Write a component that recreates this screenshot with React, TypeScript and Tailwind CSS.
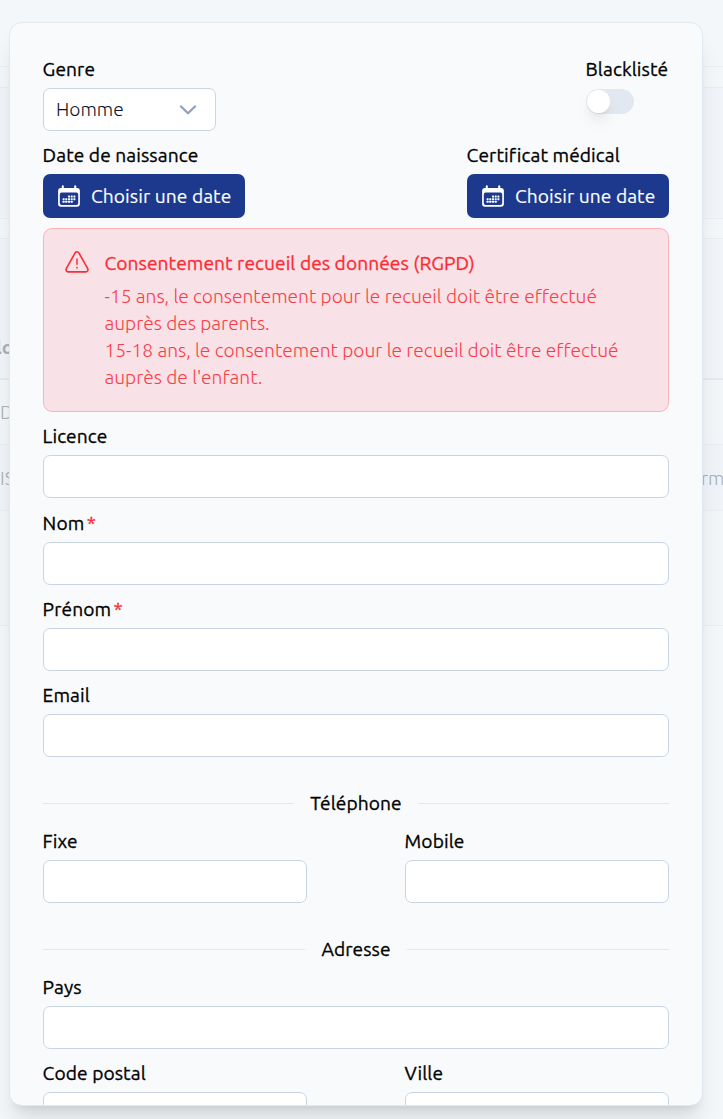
import { ReactNode } from "react";

function Label({ children, required }: { children: ReactNode; required?: boolean }) {
  return (
    <div className="-ml-[0.4px] h-[27px] whitespace-nowrap text-[19.2px] leading-[27px] tracking-[0.07px] text-black [-webkit-text-stroke:0.3px]">
      {children}
      {required && <span className="ml-[2.4px] text-[#fb2c36]">*</span>}
    </div>
  );
}

function Field({ label, required, className = "" }: { label: string; required?: boolean; className?: string }) {
  return (
    <label className={"flex flex-col gap-[5px] " + className}>
      <Label required={required}>{label}</Label>
      <input className="h-[43px] w-full rounded-[7px] border border-[#cad5e2] bg-white px-3 outline-none" />
    </label>
  );
}

const DOTS = [
  [10, 10.6], [12.7, 10.6], [15.4, 10.6],
  [4.6, 13.2], [7.3, 13.2], [10, 13.2], [12.7, 13.2], [15.4, 13.2],
  [4.6, 15.8], [7.3, 15.8], [10, 15.8], [12.7, 15.8],
];

function CalendarIcon() {
  return (
    <svg viewBox="0 0 22 22" className="size-[22px] shrink-0" fill="currentColor">
      <path
        fillRule="evenodd"
        d="M3.2 2.9h15.6A3 3 0 0 1 21.9 6v12.6a3 3 0 0 1-3.1 3.1H3.2A3 3 0 0 1 .1 18.6V6a3 3 0 0 1 3.1-3.1ZM3.7 7.6a1.9 1.9 0 0 0-1.9 1.9v8.6a1.9 1.9 0 0 0 1.9 1.9h14.6a1.9 1.9 0 0 0 1.9-1.9V9.5a1.9 1.9 0 0 0-1.9-1.9Z"
      />
      <rect x="3.8" y="0.3" width="2" height="4" rx="1" />
      <rect x="16.2" y="0.3" width="2" height="4" rx="1" />
      {DOTS.map(([x, y]) => (
        <rect key={`${x}-${y}`} x={x} y={y} width="2" height="2" rx="0.4" />
      ))}
    </svg>
  );
}

function WarningIcon() {
  return (
    <svg viewBox="0 0 24 22" className="h-[22px] w-6 shrink-0" fill="none" stroke="currentColor" strokeWidth="1.6" strokeLinecap="round" strokeLinejoin="round">
      <path d="M10.1 1.9 1.3 17.7A2.2 2.2 0 0 0 3.2 20.9H20.8A2.2 2.2 0 0 0 22.7 17.7L13.9 1.9A2.2 2.2 0 0 0 10.1 1.9Z" />
      <path d="M12 8v5.2" strokeWidth="1.5" />
      <path d="M12 16.5v.2" strokeWidth="1.7" />
    </svg>
  );
}

function DateField({ label }: { label: string }) {
  return (
    <div className="flex w-[202px] flex-col gap-[5px]">
      <Label>{label}</Label>
      <button className="flex h-11 items-center rounded-[7px] bg-[#1c398e] pl-[15px] text-[19.2px] text-white">
        <CalendarIcon />
        <span className="ml-[11px] whitespace-nowrap tracking-[0.06px] [-webkit-text-stroke:0.15px]">Choisir une date</span>
      </button>
    </div>
  );
}

function Divider({ title, className }: { title: string; className: string }) {
  return (
    <div className={"flex h-[27px] items-center gap-4 " + className}>
      <div className="h-px flex-1 bg-[#e2e8f0]" />
      <span className="text-[19.2px] leading-[27px] tracking-[0.07px] text-black [-webkit-text-stroke:0.3px]">{title}</span>
      <div className="h-px flex-1 bg-[#e2e8f0]" />
    </div>
  );
}

function Backdrop() {
  return (
    <div className="flex h-full flex-col text-[19.2px] font-light text-[#abb0b6]">
      <div className="h-[67px] border-b border-[#e9eef3]" />
      <div className="h-[21px] border-b border-[#e9eef3]" />
      <div className="h-[131px] border-b border-[#e9eef3] bg-[#f1f5f9]" />
      <div className="h-5 border-b border-[#e9eef3]" />
      <div className="flex h-[141px] items-end border-b-2 border-[#e6ebf2] bg-[#f1f5f9] pb-[16px] font-bold">
        <span className="-ml-[4px]">lo</span>
      </div>
      <div className="flex h-[65px] items-center border-b border-[#e9eef3] bg-[#f2f6f9]">D</div>
      <div className="flex h-[66px] items-center justify-between border-b border-[#e9eef3] bg-[#f0f4f9] pt-0.5">
        <span>IS</span>
        <span className="w-[22px]">rm</span>
      </div>
      <div className="h-[115px] border-b border-[#e9eef3] bg-[#f2f6f9]" />
    </div>
  );
}

export default function App() {
  return (
    <div className="relative h-[1119px] w-[723px] overflow-hidden bg-[#f3f7fa] font-['Ubuntu','Noto_Sans',sans-serif]">
      <Backdrop />
      <div className="absolute top-[22px] left-[9px] h-[1084px] w-[694px] overflow-hidden rounded-[13px] border border-[#e2e8f0] bg-[#f8fafc] px-[33px] pt-[33px] shadow-xl">
        <div className="flex justify-between">
          <div className="flex flex-col gap-[5px]">
            <Label>Genre</Label>
            <button className="flex h-[43px] w-[173px] items-center justify-between rounded-[7px] border border-[#cad5e2] bg-white pr-[18px] pl-3 text-[19.2px] font-light text-[#0f172b]">
              Homme
              <svg viewBox="0 0 18 10" className="h-2.5 w-[18px]" fill="none" stroke="#90a1b9" strokeWidth="2.3" strokeLinecap="round" strokeLinejoin="round">
                <path d="m2 1.5 7 6.8 7-6.8" />
              </svg>
            </button>
          </div>
          <div className="flex w-[83px] flex-col gap-[6px]">
            <Label>Blacklisté</Label>
            <div className="flex h-[25px] w-12 items-center rounded-full bg-[#e2e8f0] p-px">
              <div className="size-[22.5px] rounded-full bg-white shadow-lg" />
            </div>
          </div>
        </div>
        <div className="mt-[11px] flex justify-between">
          <DateField label="Date de naissance" />
          <DateField label="Certificat médical" />
        </div>
        <div className="mt-[10px] flex h-[184px] rounded-[9px] border border-[#ffb3b9] bg-[#f8e2e7] px-[21px] pt-[21px] text-[19.2px] leading-[27px] text-[#fb2c36]">
          <div className="pt-[0.8px]"><WarningIcon /></div>
          <div className="ml-[15.5px] whitespace-nowrap">
            <div className="tracking-[0.05px] [-webkit-text-stroke:0.3px]">Consentement recueil des données (RGPD)</div>
            <p className="mt-[6px] font-light tracking-[-0.02px] opacity-90">
              -15 ans, le consentement pour le recueil doit être effectué<br />auprès des parents.<br />
              15-18 ans, le consentement pour le recueil doit être effectué<br />auprès de l'enfant.
            </p>
          </div>
        </div>
        <Field label="Licence" className="mt-[11px]" />
        <Field label="Nom" required className="mt-3" />
        <Field label="Prénom" required className="mt-[11px]" />
        <Field label="Email" className="mt-[11px]" />
        <Divider title="Téléphone" className="mt-[33px]" />
        <div className="mt-[11px] flex justify-between">
          <Field label="Fixe" className="w-[264px]" />
          <Field label="Mobile" className="w-[264px]" />
        </div>
        <Divider title="Adresse" className="mt-[33px]" />
        <Field label="Pays" className="mt-[11px]" />
        <div className="mt-[11px] flex justify-between">
          <Field label="Code postal" className="w-[264px]" />
          <Field label="Ville" className="w-[264px]" />
        </div>
      </div>
    </div>
  );
}
